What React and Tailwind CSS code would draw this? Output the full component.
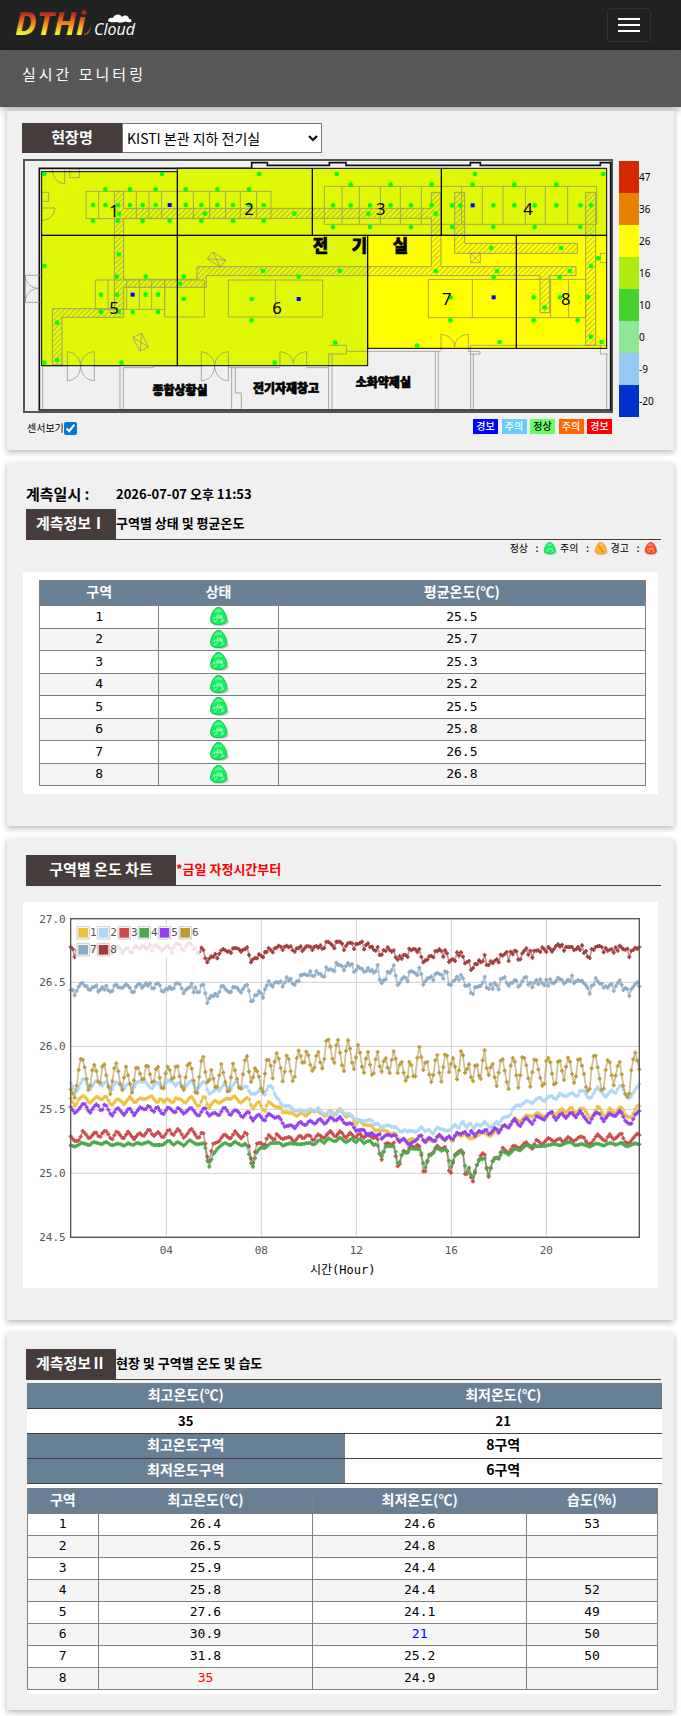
import React, { useState } from "react";

const KR = "font-['Noto_Sans_CJK_KR',sans-serif]";
const MONO = "font-['DejaVu_Sans_Mono','Noto_Sans_CJK_KR',monospace]";

/* ---------- logo and icons ---------- */

function Logo() {
  return (
    <svg width="132" height="48" viewBox="0 0 132 48" className="block" role="img" aria-label="DTHi Cloud">
      <defs>
        <linearGradient id="flame" x1="0" y1="0" x2="0" y2="1">
          <stop offset="0.25" stopColor="#a81f1c" />
          <stop offset="0.5" stopColor="#ef7a1c" />
          <stop offset="0.76" stopColor="#f2f32f" />
        </linearGradient>
      </defs>
      <text x="1" y="34" fontFamily="Open Sans, sans-serif" fontSize="32" fontWeight="700" fontStyle="italic" fill="url(#flame)">
        DTHi
      </text>
      <path d="M70 33c4-1 5-4 7-8-1 5-2 9-7 9z" fill="#a8641f" />
      <text x="80" y="34" fontFamily="Open Sans, sans-serif" fontSize="16" fontStyle="italic" fill="#fff">
        Cloud
      </text>
      <path d="M94 20c0-3 3-4 5-3 1-4 7-5 9-1 3-3 7-1 7 2 3 0 3 2 2 3-3 1-5-1-7 0-3 1-5 1-7 0-3 0-6 1-9-1z" fill="#fff" />
    </svg>
  );
}

const EGG = {
  safe: ["#12f05a", "#00b83c", "#9dffc0"],
  care: ["#ffb52e", "#d98200", "#ffe09a"],
  warn: ["#ff4a35", "#c81205", "#ffd060"],
};

function Egg({ kind, label, className }) {
  const [fill, edge, light] = EGG[kind];
  return (
    <svg viewBox="0 0 20 19" className={className} role="img" aria-label={label}>
      <ellipse cx="11" cy="15" rx="9" ry="4" fill="#d0cdd2" />
      <path d="M9.500 .2C13.500 .2 18 8 18 12.500 18 16 15 17.500 9.500 17.500S1.500 16 1.500 12.500C1.500 8 5.500 .2 9.500 .2z" fill={fill} stroke={edge} strokeWidth="0.8" />
      <path d="M5 6c2-5 7-5 9-1-3 0-6 0-9 1z" fill={light} opacity="0.5" />
      {kind === "care" ? (
        <path d="M7 4c1 5 3 8 7 11" stroke={edge} strokeWidth="1.500" fill="none" />
      ) : (
        <path d="M4.500 11.500c2-3 2 0 0 .5m3-.5 1-3 1 3m1.500 0v-3l2 3v-3M5 15l3-2m4 2 3-2" stroke={light} strokeWidth="1.200" fill="none" />
      )}
    </svg>
  );
}

/* ---------- floor plan ---------- */

const ZONES = [
  ["1", 125, 65, 407, 191, 342, 201],
  ["2", 532, 55, 405, 201, 747, 195],
  ["3", 937, 55, 387, 201, 1142, 195],
  ["4", 1324, 55, 496, 201, 1584, 195],
  ["5", 125, 256, 407, 391, 342, 492],
  ["6", 532, 256, 571, 391, 831, 492],
  ["7", 1103, 256, 446, 339, 1340, 465],
  ["8", 1549, 256, 271, 339, 1697, 465],
];

const SENSORS = [
  [133, 72], [486, 72], [778, 72], [1010, 72], [1425, 72], [1810, 72],
  [316, 118], [390, 118], [467, 118], [557, 118], [652, 118], [747, 118],
  [279, 165], [316, 165], [353, 165], [390, 165], [428, 165], [467, 165], [557, 165], [604, 165], [652, 165], [699, 165], [747, 165], [791, 165],
  [357, 191], [615, 191], [883, 191], [1105, 191], [1307, 191],
  [279, 212], [353, 212], [428, 212], [509, 212], [604, 212], [699, 212], [791, 212],
  [1052, 104], [1172, 104], [1295, 104], [1418, 104], [1543, 104], [1669, 104],
  [999, 166], [1052, 166], [1110, 166], [1172, 166], [1233, 166], [1295, 166], [1356, 166], [1381, 166], [1480, 166], [1543, 166], [1604, 166], [1669, 166], [1741, 166], [1773, 166],
  [999, 231], [1110, 231], [1233, 231], [1356, 231], [1480, 231], [1604, 231], [1741, 231],
  [357, 313], [133, 348], [351, 380], [437, 380], [551, 380], [541, 401], [789, 363], [896, 380], [1020, 363], [1307, 363], [1491, 363], [1481, 381], [1679, 381], [1709, 363], [1474, 294], [1683, 294], [1794, 325], [1773, 348],
  [303, 434], [351, 434], [437, 434], [474, 434], [551, 447], [755, 447], [755, 511],
  [303, 486], [357, 486], [398, 486], [474, 486], [171, 518], [171, 630], [133, 638], [365, 638], [824, 638], [1006, 578],
  [1352, 442], [1601, 442], [1680, 442], [1764, 441], [1634, 472], [1351, 511], [1601, 511], [1733, 511], [1251, 587], [1499, 576], [1773, 560], [1805, 576],
];

const MASTERS = [[509, 165], [1418, 166], [398, 434], [896, 447], [1481, 442]];

const DUCTS =
  "M343 124h28v51h923v-48h29v223h405v27h-79v111h-29V377H619v35H371v90H186v143h-29V476h186zM371 205v183h220v-38h703V205zM1364 127h30v153h338v30h-368zM1757 127h30v459h-30z";

const CABINETS =
  "M258 124h555v82H258zM296 124v82M409 124v82M447 124v82M485 124v82M580 124v82M629 124v82M677 124v82M721 124v82M770 124v82" +
  "M973 109h817v114H973zM1026 109v114M1078 109v114M1141 109v114M1201 109v114M1264 109v114M1385 109v114M1447 109v114M1509 109v114M1576 109v114M1636 109v114M1703 109v114" +
  "M286 390h208v88H286zM324 390v88M380 390v88M418 390v88M455 390v88M494 390h119v111H494zM685 390h283v111H685zM826 390v111" +
  "M1285 388h472v115h-472zM1417 388v115M1652 388v115M1706 388v115";

const FITTINGS =
  "M157 58c2 26 15 42 37 43V58M209 58h29v25h-29zM125 127h21v27h-21M125 174h40c-3 22-17 37-40 37" +
  "M125 376H76v81h49M76 376c0 22 15 38 40 39-25 2-40 17-40 42" +
  "M622 326l17-20 38 25-17 20zM622 326l55 5M639 306l21 45M398 562l27-12 20 41-25 12zM398 562l47 29M425 550l-5 53" +
  "M1412 310h29v28h-29zM1412 310l29 28M1441 310l-29 28M1820 310h-19v28h19" +
  "M202 692V605c22 2 38 18 40 43 1-25 17-41 41-43v87c-24-1-40-18-41-44-1 27-17 43-40 44" +
  "M604 692V605c22 2 38 18 40 43 1-25 17-41 41-43v87c-24-1-40-18-41-44-1 27-17 43-40 44" +
  "M840 648V605c22 2 38 14 40 36 1-22 17-34 40-36v43" +
  "M1323 600V553c22 2 38 14 41 38 1-24 17-36 41-38v47" +
  "M128 650v127M128 648h74M283 648h77v129M370 777V653h90v-5h144M685 653h155M920 653h66v124M695 653v124M706 653v76h18v48M996 777V612M986 586h53v26h-53v41" +
  "M1039 604h283M1306 604v173M1315 604v173M1405 600v4h35v8h-29V586h409M1412 612v165M1420 612v165M1801 586v26h24M1820 612v165";

function FloorPlan({ showSensors }) {
  return (
    <svg viewBox="69 27 1770 762" className="block w-full" role="img" aria-label="전기실 평면도">
      <defs>
        <pattern id="hatch" width="11" height="11" patternUnits="userSpaceOnUse" patternTransform="rotate(45)">
          <path d="M0 0v11" stroke="#8c8c50" strokeWidth="3" />
        </pattern>
      </defs>
      <rect x="72" y="30" width="1764" height="756" fill="#f0f0f0" stroke="#555" strokeWidth="6" />
      <path d="M118 55V780H1832V38h-31v8h-360v-8h-30v8h-373v-8h-50v8H802v-8h-47v17z" fill="none" stroke="#111" strokeWidth="5" />
      {ZONES.map(([id, x, y, w, h]) => (
        <rect key={id} x={x} y={y} width={w} height={h} fill={id > "6" ? "#ffff00" : "#e0f808"} />
      ))}
      <path d={DUCTS} fill="url(#hatch)" fillRule="evenodd" stroke="#a0a060" strokeWidth="3" />
      <path d={CABINETS} fill="none" stroke="#a8a850" strokeWidth="3" />
      <path d={FITTINGS} fill="none" stroke="#8a8a8a" strokeOpacity="0.7" strokeWidth="3" />
      <g fontFamily="Noto Sans CJK KR, sans-serif" fontWeight="900" stroke="#000" strokeWidth="2" textAnchor="middle">
        <text x="961" y="307" fontSize="50">전</text>
        <text x="1078" y="307" fontSize="50">기</text>
        <text x="1201" y="307" fontSize="50">실</text>
        <text x="540" y="734" fontSize="36">종합상황실</text>
        <text x="858" y="730" fontSize="36">전기자재창고</text>
        <text x="1150" y="712" fontSize="36">소화약제실</text>
      </g>
      {ZONES.map(([id, x, y, w, h]) => (
        <rect key={id} x={x} y={y} width={w} height={h} fill="none" stroke="#000" strokeWidth="3" />
      ))}
      {showSensors && (
        <g>
          {SENSORS.map(([x, y]) => (
            <circle key={x + "-" + y} cx={x} cy={y} r="7" fill="#00ff00" />
          ))}
          {MASTERS.map(([x, y]) => (
            <rect key={x + "-" + y} x={x - 6} y={y - 6} width="12" height="12" fill="#0000ff" />
          ))}
        </g>
      )}
      <g fontFamily="Noto Sans, sans-serif" fontSize="50" textAnchor="middle">
        {ZONES.map(([id, , , , , tx, ty]) => (
          <text key={id} x={tx} y={ty}>{id}</text>
        ))}
      </g>
    </svg>
  );
}

/* ---------- temperature chart ---------- */

const SERIES = [
  { id: "1", color: "#edc240", keys: "212,625 225,650 238,625 251,617 270,640 287,622 293,620 305,630 317,617 335,648 352,625 373,643 390,620 405,640 418,625 436,628 454,617 471,640 483,622 489,640 501,625 519,640 525,625 543,628 555,640 573,618 596,652 614,614 626,656 644,630 656,640 680,625 691,628 705,618 721,640 745,620 757,660 775,633 793,667 805,635 823,648 835,655 838,642 846,667 876,668 888,679 905,667 917,679 935,662 953,663 977,680 989,660 1005,676 1019,655 1037,680 1055,675 1067,705 1079,690 1090,705 1114,706 1126,722 1144,720 1160,722 1174,735 1185,726 1197,756 1210,745 1221,757 1232,745 1250,752 1262,732 1274,757 1286,750 1304,755 1316,735 1334,752 1346,740 1358,756 1370,730 1382,740 1394,730 1405,745 1420,745 1435,735 1450,725 1470,740 1486,722 1496,726 1510,705 1525,712 1543,684 1560,697 1580,675 1597,680 1612,667 1632,682 1650,668 1667,675 1685,655 1697,670 1714,650 1727,675 1740,655 1752,657 1770,684 1778,680 1795,646 1815,683 1829,655 1845,672 1857,651 1868,655 1878,678 1893,684 1911,648 1918,648" },
  { id: "2", color: "#afd8f8", keys: "212,579 225,602 233,602 245,570 252,565 270,600 287,572 293,572 305,590 317,572 335,602 346,577 353,577 370,600 382,582 390,580 396,602 412,575 436,575 454,597 471,575 489,597 501,572 519,575 525,590 537,575 549,600 573,569 590,600 614,570 626,612 644,602 650,592 656,605 673,580 691,600 709,571 721,598 739,587 751,611 769,611 775,602 781,602 793,617 805,590 811,586 817,590 826,617 838,630 846,647 870,648 882,663 900,660 917,666 929,657 947,668 953,652 971,673 989,668 1001,668 1007,675 1020,660 1037,673 1049,670 1060,686 1073,690 1090,694 1103,690 1114,688 1120,705 1132,700 1144,712 1162,705 1179,712 1187,711 1203,727 1215,718 1221,728 1227,722 1250,725 1256,722 1262,708 1275,724 1290,718 1298,735 1310,711 1322,717 1340,722 1352,720 1364,703 1376,715 1388,693 1400,715 1411,694 1417,721 1429,702 1441,708 1455,694 1470,714 1490,696 1495,706 1507,684 1530,678 1536,658 1550,645 1562,648 1580,632 1597,640 1608,627 1620,622 1632,635 1644,620 1656,618 1667,630 1680,610 1697,620 1715,607 1732,622 1740,602 1752,602 1765,625 1775,622 1792,590 1816,622 1834,600 1845,612 1857,588 1865,587 1880,620 1890,625 1905,600 1918,582" },
  { id: "3", color: "#cb4b4b", keys: "212,739 225,754 238,750 248,722 268,747 287,724 299,744 311,723 320,724 335,752 350,722 370,748 385,724 402,748 418,728 430,740 447,716 460,740 475,724 489,745 507,716 519,738 534,715 552,745 573,715 596,748 608,720 614,747 626,825 638,762 656,755 673,732 691,748 705,724 725,747 739,720 757,830 769,762 781,757 793,768 805,733 823,752 830,732 846,748 870,740 882,757 899,735 911,748 917,738 930,735 940,755 953,732 972,745 990,722 1006,742 1022,722 1037,745 1050,728 1066,745 1078,728 1090,745 1102,732 1120,745 1132,738 1143,818 1158,757 1175,765 1179,745 1191,828 1197,830 1208,780 1221,790 1232,765 1245,775 1250,762 1262,772 1268,838 1274,854 1286,795 1298,790 1310,765 1322,778 1340,768 1346,838 1352,854 1364,795 1376,785 1388,778 1393,848 1399,862 1405,825 1417,882 1429,828 1440,800 1453,785 1465,865 1477,815 1487,800 1495,808 1507,772 1525,790 1540,765 1560,775 1578,755 1596,778 1610,748 1626,765 1645,743 1662,755 1679,745 1690,757 1705,740 1720,755 1738,740 1750,740 1762,762 1775,760 1792,732 1815,755 1828,732 1842,750 1863,728 1875,755 1887,762 1911,730 1918,735" },
  { id: "4", color: "#4da74d", keys: "212,766 225,770 245,758 269,766 281,755 305,763 317,755 335,767 353,760 373,767 385,760 400,765 412,758 425,763 445,755 459,765 489,765 507,750 519,765 534,755 552,768 567,750 590,763 614,760 626,838 638,795 656,772 673,758 691,767 705,755 727,768 739,758 757,838 769,788 781,772 793,775 811,760 840,758 846,768 870,760 900,763 930,758 941,765 960,748 972,760 985,745 1005,755 1022,742 1037,758 1055,745 1067,758 1078,745 1092,760 1108,750 1120,765 1132,762 1143,805 1158,768 1185,770 1191,818 1197,822 1208,783 1220,790 1232,775 1262,778 1274,840 1286,798 1298,792 1310,770 1322,783 1340,775 1352,835 1364,798 1388,780 1399,855 1405,828 1417,868 1429,828 1440,805 1447,810 1453,798 1465,860 1477,815 1487,802 1495,808 1507,785 1518,788 1525,795 1545,775 1560,782 1578,765 1600,770 1632,768 1662,762 1680,766 1700,758 1712,755 1725,767 1745,762 1770,770 1790,760 1810,767 1830,758 1850,765 1863,757 1880,770 1905,760 1918,763" },
  { id: "5", color: "#9440ed", keys: "212,651 225,671 238,655 251,638 270,670 287,643 293,643 305,668 311,643 320,648 335,680 352,652 373,676 388,652 402,676 420,652 436,660 446,645 460,668 471,648 489,676 505,650 525,670 534,652 552,672 572,652 596,680 614,650 626,678 644,667 656,678 673,650 691,678 703,660 714,663 727,684 745,662 757,694 775,672 793,694 805,670 825,683 838,680 853,710 876,705 882,717 899,694 917,708 929,690 945,703 959,685 975,703 992,680 1006,694 1020,680 1035,702 1055,700 1067,722 1090,718 1102,737 1114,728 1130,740 1138,728 1144,747 1160,733 1174,738 1185,733 1197,757 1210,745 1225,764 1250,750 1262,732 1274,760 1286,742 1304,755 1316,732 1334,752 1346,738 1358,750 1370,728 1382,733 1394,725 1405,740 1412,722 1425,738 1435,722 1450,728 1458,715 1468,735 1486,712 1496,728 1512,703 1525,714 1543,686 1560,710 1578,682 1597,702 1610,677 1632,690 1644,672 1656,665 1667,692 1685,668 1697,685 1714,665 1727,683 1740,662 1755,685 1768,700 1786,668 1798,670 1810,695 1828,670 1845,680 1860,660 1878,695 1893,704 1905,675 1918,663" },
  { id: "6", color: "#bd9b33", keys: "212,598 225,625 240,506 250,510 265,600 270,597 280,521 287,530 299,596 310,506 330,618 346,514 352,527 365,610 378,528 390,580 396,610 410,522 430,580 440,514 459,590 471,518 489,613 500,530 507,530 518,580 530,514 549,610 564,518 572,521 590,628 608,484 620,575 626,580 634,540 649,606 664,521 685,620 700,517 721,610 739,484 751,575 757,575 763,532 775,550 787,620 799,510 810,510 818,568 828,484 840,517 847,575 852,568 858,498 864,495 876,570 882,580 888,510 896,480 911,530 921,476 935,541 941,545 953,476 965,538 971,530 977,457 983,445 989,460 1001,533 1007,475 1013,441 1031,556 1042,445 1048,461 1060,545 1066,522 1072,461 1078,475 1090,560 1102,476 1114,552 1120,560 1132,476 1143,556 1155,495 1168,556 1179,484 1185,484 1191,556 1203,507 1215,571 1221,576 1227,518 1232,511 1244,580 1256,468 1262,475 1268,548 1280,503 1292,580 1298,568 1310,480 1322,587 1334,498 1340,480 1346,552 1358,503 1363,511 1370,571 1376,556 1381,484 1388,484 1393,548 1399,548 1405,511 1417,590 1423,530 1429,518 1441,580 1453,468 1460,533 1465,560 1477,514 1489,595 1501,514 1507,503 1525,606 1531,530 1537,503 1543,511 1555,595 1561,560 1566,503 1572,500 1578,518 1590,598 1602,511 1607,503 1626,587 1632,590 1638,514 1644,503 1650,514 1662,583 1668,583 1674,515 1679,507 1692,571 1702,503 1708,503 1714,541 1721,580 1727,568 1732,511 1738,503 1750,541 1757,590 1768,613 1774,545 1780,500 1786,490 1798,560 1805,600 1810,606 1816,545 1822,511 1828,511 1840,590 1846,560 1857,507 1869,580 1875,610 1887,628 1893,548 1899,514 1905,484 1911,507 1918,538" },
  { id: "7", color: "#8cacc6", keys: "212,300 219,300 225,320 233,290 239,290 245,270 251,290 257,286 263,290 269,309 275,286 281,300 287,277 293,302 299,309 305,281 311,309 317,281 323,300 335,308 346,278 354,292 370,294 376,281 388,290 400,313 406,293 418,278 424,293 430,293 436,274 442,293 448,274 454,293 460,300 466,282 477,279 489,313 495,293 501,304 507,287 519,302 525,282 537,279 543,287 549,313 561,293 567,301 573,270 579,313 585,288 591,306 597,312 603,288 608,281 614,290 620,343 626,332 632,313 638,325 644,306 650,320 656,313 662,290 668,285 680,304 686,302 691,317 697,290 709,293 715,293 721,313 727,300 739,282 745,288 751,332 757,339 763,315 769,319 775,305 781,302 787,331 793,300 799,293 805,270 817,293 823,279 829,274 835,282 840,266 846,290 852,290 858,254 864,278 870,262 882,291 888,270 894,283 899,255 911,255 917,248 923,267 929,239 941,267 947,239 953,251 965,251 971,275 977,228 983,240 989,240 995,233 1001,254 1007,216 1013,225 1025,225 1031,244 1043,217 1049,228 1055,217 1061,247 1067,244 1073,228 1079,235 1085,235 1091,245 1097,245 1103,233 1109,244 1114,238 1126,254 1132,213 1138,266 1144,282 1150,270 1156,274 1162,244 1168,250 1174,247 1179,217 1185,244 1191,286 1197,283 1203,270 1215,256 1221,283 1227,247 1233,244 1245,247 1251,263 1256,233 1262,233 1268,286 1274,280 1280,263 1286,270 1292,251 1298,278 1304,254 1310,247 1316,254 1322,248 1328,272 1334,247 1340,236 1346,282 1352,288 1358,274 1364,274 1370,255 1375,278 1381,255 1387,255 1393,286 1400,289 1405,275 1411,305 1417,320 1423,292 1435,290 1447,286 1453,251 1459,290 1465,302 1471,278 1477,302 1483,278 1489,282 1495,304 1501,267 1507,267 1512,255 1518,274 1524,290 1530,279 1537,279 1542,270 1549,270 1555,290 1561,286 1567,274 1578,255 1584,286 1590,274 1596,294 1608,267 1614,286 1620,267 1632,288 1638,267 1644,289 1650,267 1656,279 1662,280 1668,274 1673,262 1679,268 1685,267 1691,282 1697,278 1703,267 1709,278 1715,251 1720,282 1732,270 1738,274 1744,270 1756,286 1762,286 1768,319 1774,286 1780,290 1786,262 1798,282 1804,278 1810,294 1816,288 1822,294 1834,278 1840,305 1846,290 1858,270 1864,282 1870,300 1881,290 1887,323 1893,300 1911,275 1918,289" },
  { id: "8", color: "#a23c3c", keys: "212,171 219,178 225,206 231,175 242,168 254,182 266,170 278,186 290,168 302,178 314,160 326,180 340,195 346,165 352,180 358,163 364,192 382,170 388,180 394,193 406,165 418,178 430,165 442,182 448,155 454,187 466,158 472,175 477,163 483,184 501,168 507,165 513,193 525,163 537,160 549,186 561,160 573,158 579,182 585,168 592,190 598,187 607,167 620,220 626,213 632,193 638,210 644,183 650,210 661,183 673,175 680,190 685,174 691,198 697,177 703,171 709,178 715,170 721,190 727,176 733,184 739,167 745,182 751,220 763,202 769,210 775,193 781,193 787,208 793,185 799,190 805,174 811,174 816,195 822,175 828,175 840,163 846,183 858,163 864,175 870,165 882,190 888,172 894,183 899,159 905,183 911,183 917,166 923,173 929,162 935,183 941,175 947,163 953,178 959,163 971,183 977,155 983,155 989,160 995,160 1001,182 1007,155 1019,155 1025,155 1031,183 1037,170 1043,160 1055,156 1061,180 1067,162 1079,162 1084,144 1090,182 1102,155 1108,172 1114,167 1126,187 1132,164 1138,194 1144,198 1150,178 1156,186 1162,171 1174,186 1180,178 1191,216 1197,193 1203,210 1209,197 1215,190 1221,210 1227,175 1238,184 1244,167 1250,195 1256,170 1262,190 1268,220 1274,210 1280,212 1292,193 1298,210 1304,182 1310,186 1322,174 1328,208 1333,181 1340,182 1346,217 1358,205 1364,221 1370,182 1375,203 1381,186 1387,190 1393,221 1400,217 1406,208 1411,240 1417,240 1423,220 1429,228 1435,209 1447,222 1453,186 1459,224 1465,228 1471,212 1477,222 1489,205 1495,221 1501,194 1507,197 1513,194 1519,182 1525,217 1531,184 1537,194 1543,182 1549,182 1555,209 1561,209 1567,190 1579,174 1585,194 1591,182 1597,203 1603,182 1615,181 1621,186 1627,171 1639,186 1645,170 1657,186 1669,167 1674,163 1680,170 1686,163 1692,182 1698,171 1716,171 1722,180 1728,178 1734,171 1740,180 1745,163 1751,190 1757,182 1768,213 1774,175 1780,182 1786,171 1804,167 1810,190 1816,172 1822,182 1834,176 1840,190 1846,171 1852,184 1858,167 1875,182 1881,167 1887,206 1893,182 1899,182 1905,172 1911,178 1918,171" },
];

// Turns the turning points of a series into one sample per five minutes.
function samples(keys) {
  const pts = keys.split(" ").map((p) => p.split(",").map(Number));
  const out = [];
  let k = 0;
  for (let i = 0; i < 288; i++) {
    const x = 212 + (i * 1706) / 287;
    while (k < pts.length - 2 && pts[k + 1][0] < x) k++;
    const [x0, y0] = pts[k];
    const [x1, y1] = pts[k + 1];
    const t = Math.min(1, Math.max(0, (x - x0) / (x1 - x0)));
    out.push([Math.round(x), Math.round(y0 + (y1 - y0) * t)]);
  }
  return out;
}

const LINES = SERIES.map((s) => {
  const pts = samples(s.keys);
  return {
    id: s.id,
    color: s.color,
    line: "M" + pts.map((p) => p.join(" ")).join("L"),
    dots: pts.map(([x, y]) => `M${x - 6} ${y}h12M${x} ${y - 6}v12`).join(""),
  };
});

const Y_TICKS = [["27.0", 86], ["26.5", 277], ["26.0", 469], ["25.5", 658], ["25.0", 850], ["24.5", 1042]];
const X_TICKS = [["04", 499], ["08", 784], ["12", 1069], ["16", 1354], ["20", 1639]];
const KEY_SPOTS = [[230, 110], [291, 110], [353, 110], [413, 110], [474, 110], [536, 110], [230, 161], [291, 161]];

function TemperatureChart() {
  return (
    <svg viewBox="69 36 1905 1158" className="block w-full bg-white" role="img" aria-label="구역별 온도 차트">
      <g stroke="#d0d0d0" strokeWidth="3">
        {Y_TICKS.map(([t, y]) => <path key={t} d={`M212 ${y}H1918`} />)}
        {X_TICKS.map(([t, x]) => <path key={t} d={`M${x} 86V1042`} />)}
      </g>
      {LINES.map((s) => (
        <g key={s.id} fill="none">
          <path d={s.line} stroke="#000" strokeOpacity="0.12" strokeWidth="6" />
          <path d={s.line} stroke={s.color} strokeOpacity="0.5" strokeWidth="4" />
          <path d={s.dots} stroke={s.color} strokeWidth="5" />
        </g>
      ))}
      <rect x="212" y="86" width="1706" height="956" fill="none" stroke="#545454" strokeWidth="4" />
      <rect x="227" y="103" width="372" height="100" fill="#fff" fillOpacity="0.85" />
      <g fontFamily="DejaVu Sans Mono, monospace" fontSize="33" fill="#545454">
        {KEY_SPOTS.map(([x, y], i) => (
          <g key={SERIES[i].id}>
            <rect x={x + 1} y={y} width="37" height="37" fill="#fff" stroke="#ccc" strokeWidth="3" />
            <rect x={x + 5} y={y + 4} width="29" height="29" fill={SERIES[i].color} />
            <text x={x + 40} y={y + 28}>{SERIES[i].id}</text>
          </g>
        ))}
        {Y_TICKS.map(([t, y]) => <text key={t} x="197" y={y + 12} textAnchor="end">{t}</text>)}
        {X_TICKS.map(([t, x]) => <text key={t} x={x} y="1092" textAnchor="middle">{t}</text>)}
      </g>
      <text x="1028" y="1153" fontFamily="DejaVu Sans Mono, Noto Sans CJK KR, monospace" fontSize="36" textAnchor="middle">
        시간(Hour)
      </text>
    </svg>
  );
}

/* ---------- page parts ---------- */

function Card({ children, className }) {
  return (
    <section className={"bg-[#f0f0f0] shadow-[0_2px_6px_rgba(0,0,0,0.3)] " + className}>{children}</section>
  );
}

function SectionTitle({ title, note, wide, red }) {
  return (
    <div className="ml-[19px] mr-[13px] flex items-stretch border-b border-[#463c3c]">
      <h2 className={"flex h-[30px] items-center justify-center bg-[#463c3c] pb-[2px] text-[15px] font-bold text-white " + (wide ? "w-[150px]" : "w-[90px]")}>
        {title}
      </h2>
      <p className={"flex items-center pb-[2px] text-[13px] font-bold " + (red ? "text-[#ff0000]" : "text-black")}>{note}</p>
    </div>
  );
}

const SCALE = [
  ["47", "bg-[#d42800]"], ["36", "bg-[#e68200]"], ["26", "bg-[#ffff00]"], ["16", "bg-[#aeec10]"],
  ["10", "bg-[#46d22d]"], ["0", "bg-[#8ce896]"], ["-9", "bg-[#96caf2]"], ["-20", "bg-[#0032cd]"],
];

const BADGES = [
  ["경보", "bg-[#0000ff] text-white"], ["주의", "bg-[#66ccff] text-white"], ["정상", "bg-[#66ff66] text-black"],
  ["주의", "bg-[#ff6600] text-white"], ["경보", "bg-[#ff0000] text-white"],
];

const AVERAGES = ["25.5", "25.7", "25.3", "25.2", "25.5", "25.8", "26.5", "26.8"];

const READINGS = [
  ["26.4", "24.6", "53"], ["26.5", "24.8", ""], ["25.9", "24.4", ""], ["25.8", "24.4", "52"],
  ["27.6", "24.1", "49"], ["30.9", "21", "50"], ["31.8", "25.2", "50"], ["35", "24.9", ""],
];

const TH = "border border-[#808080] bg-[#678096] p-0 pb-1 text-[14px] leading-[20px] font-bold text-white";
const TD = "border border-[#808080] p-0 text-[13px] leading-[18px]";

export default function App() {
  const [showSensors, setShowSensors] = useState(true);
  return (
    <div className={"bg-white pb-[7px] text-black " + KR}>
      <header className="flex h-[50px] items-center justify-between bg-[#222] pr-[30px] pl-[14px]">
        <a href="#home"><Logo /></a>
        <button type="button" aria-label="메뉴" className="flex h-[34px] w-[44px] flex-col items-center justify-center gap-1 rounded border border-[#333]">
          <span className="h-[2px] w-[22px] bg-white" />
          <span className="h-[2px] w-[22px] bg-white" />
          <span className="h-[2px] w-[22px] bg-white" />
        </button>
      </header>
      <div className="h-[57px] bg-[#585858] px-[22px] pt-[13px] shadow-[0_2px_8px_rgba(0,0,0,0.35)]">
        <h1 className="text-[15px] leading-[22px] tracking-[3px] text-white">실시간 모니터링</h1>
      </div>

      <main className="mx-[7px] mt-1 flex flex-col gap-[13px]">
        <Card className="pt-3 pb-[13px]">
          <div className="flex pl-[15px]">
            <label htmlFor="site" className="flex h-[30px] w-[100px] items-center justify-center bg-[#463c3c] pb-[2px] text-[15px] font-bold text-white">
              현장명
            </label>
            <select id="site" className="h-[30px] w-[200px] border border-[#767676] bg-white text-[14px]">
              <option>KISTI 본관 지하 전기실</option>
            </select>
          </div>
          <div className="mt-[6px] flex items-start gap-[6px] pr-5 pl-4">
            <div className="min-w-0 flex-1">
              <FloorPlan showSensors={showSensors} />
              <div className="mt-[6px] flex items-start justify-between pl-1">
                <label htmlFor="sensors" className="flex items-center text-[10px] leading-[18px]">
                  센서보기
                  <input id="sensors" type="checkbox" checked={showSensors} onChange={(e) => setShowSensors(e.target.checked)} className="m-0 h-[13px] w-[13px] accent-[#0078d7]" />
                </label>
                <div className="flex w-[140px] justify-between pr-px">
                  {BADGES.map(([t, c], i) => (
                    <span key={i} className={"h-[15px] w-[25px] text-center text-[10px] leading-[14px] font-medium " + c}>{t}</span>
                  ))}
                </div>
              </div>
            </div>
            <ul className="mt-[2px] w-[35px] font-['Noto_Sans',sans-serif]">
              {SCALE.map(([t, c]) => (
                <li key={t} className="flex h-8 items-center text-[10px]">
                  <span className={"h-full w-5 shrink-0 " + c} />
                  {t}
                </li>
              ))}
            </ul>
          </div>
        </Card>

        <Card className="pt-4 pb-8">
          <div className="ml-[19px] flex h-[30px] items-center font-bold">
            <span className="w-[90px] text-[15px]">계측일시 :</span>
            <time className="text-[13px]">2026-07-07 오후 11:53</time>
          </div>
          <SectionTitle title="계측정보Ⅰ" note="구역별 상태 및 평균온도" />
          <div className={"flex h-4 items-center justify-end gap-[3px] pr-4 text-[10px] " + MONO}>
            정상 : <Egg kind="safe" label="정상" className="h-[13px] w-[14px]" />
            주의 : <Egg kind="care" label="주의" className="h-[13px] w-[14px]" />
            경고 : <Egg kind="warn" label="경고" className="h-[13px] w-[14px]" />
          </div>
          <div className="mx-4 mt-4 bg-white py-2 pr-3 pl-4">
            <table className="h-[206px] w-full table-fixed border-collapse text-center">
              <colgroup>
                <col className="w-[19.7%]" />
                <col className="w-[19.7%]" />
                <col />
              </colgroup>
              <thead>
                <tr className="h-[25px]">
                  <th className={TH}>구역</th>
                  <th className={TH}>상태</th>
                  <th className={TH}>평균온도(℃)</th>
                </tr>
              </thead>
              <tbody className={MONO}>
                {AVERAGES.map((t, i) => (
                  <tr key={i} className="even:bg-[#f5f5f5]">
                    <td className={TD}>{i + 1}</td>
                    <td className={TD}><Egg kind="safe" label="정상" className="mx-auto block h-[19px] w-5" /></td>
                    <td className={TD}>{t}</td>
                  </tr>
                ))}
              </tbody>
            </table>
          </div>
        </Card>

        <Card className="pt-4 pb-8">
          <SectionTitle title="구역별 온도 차트" note="*금일 자정시간부터" wide red />
          <div className="mx-4 mt-4">
            <TemperatureChart />
          </div>
        </Card>

        <Card className="pt-4 pb-4">
          <SectionTitle title="계측정보Ⅱ" note="현장 및 구역별 온도 및 습도" />
          <table className="mt-[3px] mr-3 ml-5 w-[calc(100%-32px)] table-fixed border-collapse text-center text-[14px] leading-[20px] font-bold">
            <tbody>
              <tr className="h-[25px] border-b border-[#463c3c] bg-[#678096] text-white">
                <th className="p-0 pb-[3px]">최고온도(℃)</th>
                <th className="p-0 pb-[3px]">최저온도(℃)</th>
              </tr>
              <tr className="h-[25px] border-b border-[#463c3c] bg-white">
                <td className="p-0 text-[13px]">35</td>
                <td className="p-0 text-[13px]">21</td>
              </tr>
              <tr className="h-[25px] border-b border-[#463c3c]">
                <th className="bg-[#678096] p-0 pb-[3px] text-white">최고온도구역</th>
                <td className="bg-white p-0 pb-[3px]">8구역</td>
              </tr>
              <tr className="h-[25px] border-b border-[#463c3c]">
                <th className="bg-[#678096] p-0 pb-[3px] text-white">최저온도구역</th>
                <td className="bg-white p-0 pb-[3px]">6구역</td>
              </tr>
            </tbody>
          </table>
          <div className="mr-4 ml-5 bg-white py-1">
            <table className="w-full table-fixed border-collapse text-center">
              <colgroup>
                <col className="w-[11.2%]" />
                <col className="w-[34.1%]" />
                <col className="w-[33.9%]" />
                <col />
              </colgroup>
              <thead>
                <tr className="h-[25px]">
                  <th className={TH}>구역</th>
                  <th className={TH}>최고온도(℃)</th>
                  <th className={TH}>최저온도(℃)</th>
                  <th className={TH}>습도(%)</th>
                </tr>
              </thead>
              <tbody className={MONO}>
                {READINGS.map(([hi, lo, hum], i) => (
                  <tr key={i} className="h-[22px] even:bg-[#f5f5f5]">
                    <td className={TD}>{i + 1}</td>
                    <td className={TD + (hi === "35" ? " text-[#ff0000]" : "")}>{hi}</td>
                    <td className={TD + (lo === "21" ? " text-[#0000ff]" : "")}>{lo}</td>
                    <td className={TD}>{hum}</td>
                  </tr>
                ))}
              </tbody>
            </table>
          </div>
        </Card>
      </main>
    </div>
  );
}
